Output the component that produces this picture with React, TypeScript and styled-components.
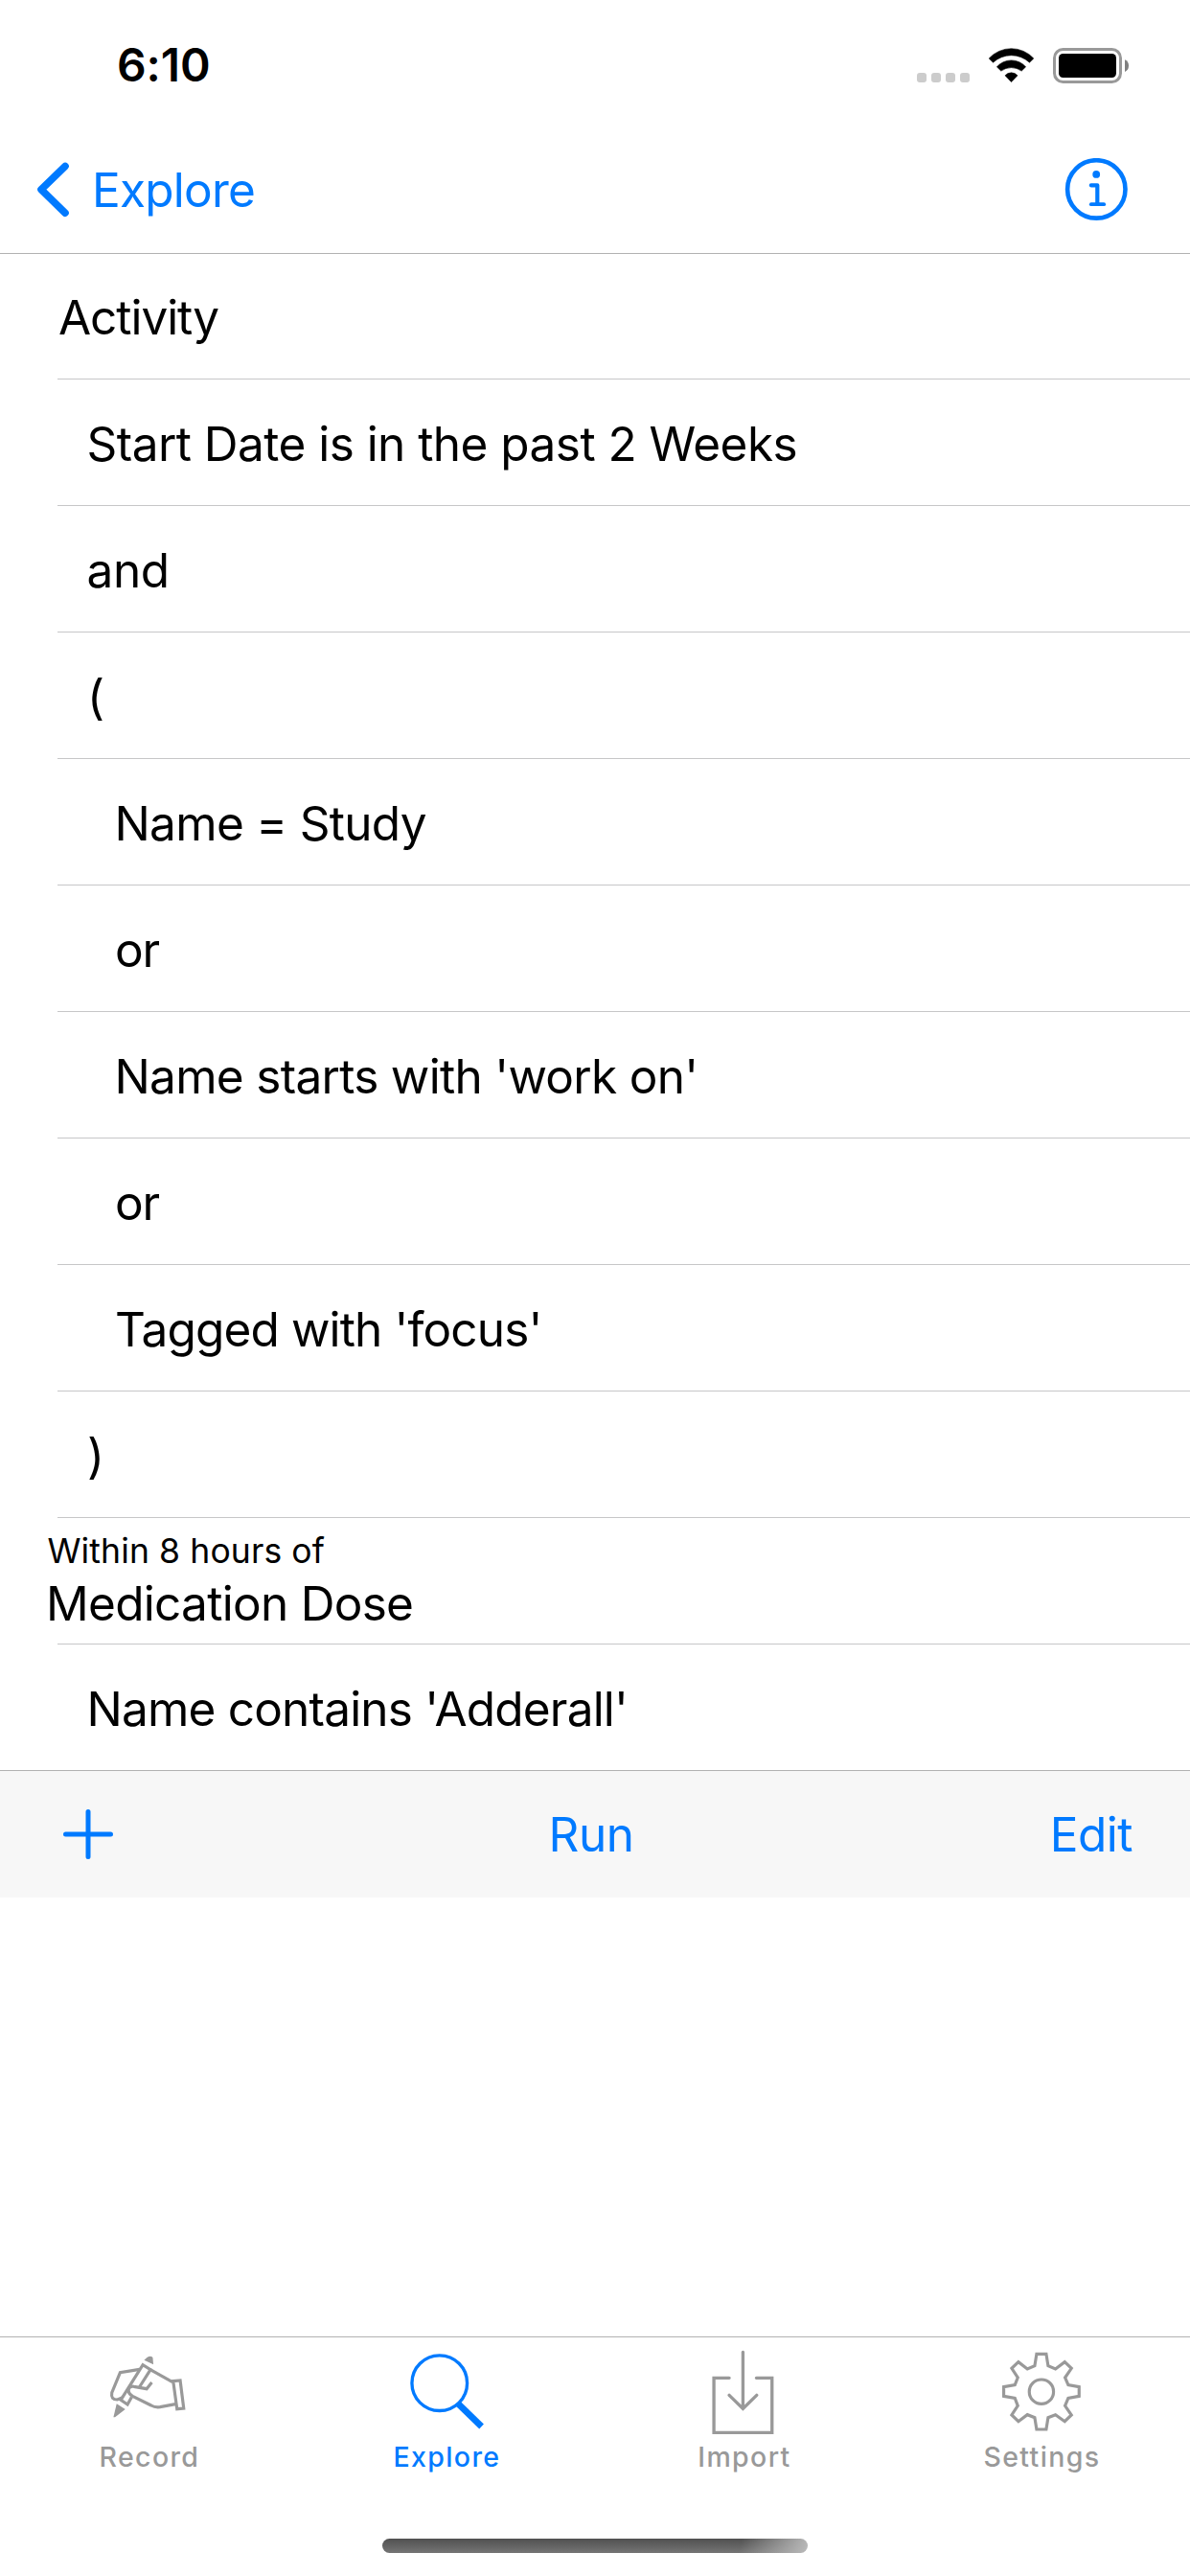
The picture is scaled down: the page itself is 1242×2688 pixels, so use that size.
import React from "react";
import styled, { createGlobalStyle } from "styled-components";

const BLUE = "#007aff";
const GRAY = "#999999";
const HAIRLINE = "#b2b2b2";
const SEPARATOR = "#c7c7c8";

const GlobalStyle = createGlobalStyle`
  body {
    margin: 0;
    background: #fff;
  }
  * {
    box-sizing: border-box;
  }
  svg {
    display: block;
    flex: none;
  }
`;

const Screen = styled.div`
  display: flex;
  flex-direction: column;
  width: 1242px;
  height: 2688px;
  overflow: hidden;
  background: #fff;
  color: #000;
  font-family: Inter, "Liberation Sans", sans-serif;
  font-size: 49.5px;
  line-height: 60px;
  white-space: pre;
`;

const StatusBar = styled.header`
  display: flex;
  align-items: center;
  justify-content: space-between;
  height: 132px;
  padding: 3px 62px 0 122px;
`;

const Clock = styled.time`
  font-size: 48px;
  font-weight: 600;
  letter-spacing: -0.1px;
`;

const NavBar = styled.nav`
  display: flex;
  align-items: center;
  justify-content: space-between;
  height: 133px;
  padding: 0 64px 0 38px;
  border-bottom: 1px solid ${HAIRLINE};
`;

const BackButton = styled.a`
  display: flex;
  align-items: center;
  gap: 22px;
  color: ${BLUE};
  letter-spacing: -0.76px;
`;

const List = styled.ul`
  margin: -1px 0 0;
  padding: 0;
  list-style: none;
`;

const Row = styled.li`
  display: flex;
  height: 132px;
  padding-left: 60px;

  &:last-child {
    padding-left: 0;
    border-bottom: 1px solid ${HAIRLINE};
  }
`;

const RowBody = styled.div<{ $inset: number; $tracking: number }>`
  display: flex;
  flex: 1;
  align-items: center;
  padding: 3px 0 0 ${(p) => p.$inset}px;
  border-bottom: 1px solid ${SEPARATOR};
  letter-spacing: ${(p) => p.$tracking}px;

  ${Row}:last-child & {
    padding-left: ${(p) => p.$inset + 60}px;
    padding-top: 2px;
    border-bottom: 0;
  }
`;

const StackedBody = styled.div`
  display: flex;
  flex: 1;
  flex-direction: column;
  padding-top: 13px;
  border-bottom: 1px solid ${SEPARATOR};
`;

const Caption = styled.span`
  margin-left: -10.5px;
  font-size: 35.5px;
  line-height: 44px;
  letter-spacing: 0.12px;
`;

const StackedTitle = styled.span`
  margin: 2px 0 0 -12px;
  letter-spacing: -0.71px;
`;

const Toolbar = styled.div`
  display: grid;
  grid-template-columns: 1fr auto 1fr;
  align-items: center;
  height: 132px;
  padding: 0 60px 0 52px;
  background: #f7f7f7;
`;

const ToolButton = styled.button<{ $align: "start" | "center" | "end" }>`
  display: block;
  justify-self: ${(p) => p.$align};
  margin: 0;
  padding: 0;
  border: 0;
  background: none;
  color: ${BLUE};
  font: inherit;
  letter-spacing: -0.5px;
`;

const PlusIcon = styled.svg`
  margin-left: 14px;
`;

const EmptyArea = styled.div`
  flex: 1;
`;

const TabBar = styled.nav`
  display: grid;
  grid-template-columns: repeat(4, 1fr);
  height: 201px;
  padding-top: 1px;
  border-top: 1px solid ${HAIRLINE};
`;

const Tab = styled.a<{ $active?: boolean }>`
  display: flex;
  flex-direction: column;
  align-items: center;
  gap: 6px;
  color: ${(p) => (p.$active ? BLUE : GRAY)};
`;

const TabLabel = styled.span`
  padding-left: 1.4px;
  font-size: 28.5px;
  font-weight: 500;
  line-height: 36px;
  letter-spacing: 1.37px;
`;

const HomeArea = styled.footer`
  display: flex;
  justify-content: center;
  height: 49px;
  padding-top: 10px;
`;

const HomeIndicator = styled.div`
  width: 444px;
  height: 15px;
  border-radius: 8px;
  background:
    linear-gradient(100deg, rgba(190, 190, 190, 0) 84%, rgba(190, 190, 190, 0.95) 100%),
    linear-gradient(#505050, #757575);
`;

const StatusIcons = () => (
  <svg width="224" height="40" viewBox="956 47 224 40">
    {[957, 972, 987, 1002].map((x) => (
      <rect key={x} x={x} y="75" width="10" height="10" rx="3" fill="#cccccc" />
    ))}
    <g stroke="#000" strokeWidth="0.6" strokeLinejoin="round">
      <path d="M1032.2 60A31.5 31.5 0 0 1 1078.8 60L1074.5 64.2A28 28 0 0 0 1036.5 64.2Z" />
      <path d="M1040.4 68.8A20 20 0 0 1 1070.6 68.8L1066.2 73.1A18 18 0 0 0 1044.8 73.1Z" />
      <path d="M1049 77.8A8.6 8.6 0 0 1 1062 77.8L1055.5 84.6Z" />
    </g>
    <rect x="1100.5" y="50.5" width="69" height="34" rx="9" fill="none" stroke="#999" strokeWidth="3" />
    <rect x="1105" y="55" width="60" height="25" rx="4.5" />
    <path d="M1174 61.2Q1178 63 1178 67.6T1174 74Z" fill="#808080" />
  </svg>
);

const ChevronIcon = () => (
  <svg width="36" height="64" viewBox="38 166 36 64" fill="none" stroke={BLUE} strokeWidth="7.6" strokeLinecap="round" strokeLinejoin="round">
    <path d="M68 173.5L43 197.8L68 222.2" />
  </svg>
);

const InfoIcon = () => (
  <svg width="68" height="66" viewBox="1110 165 68 66" fill="none" stroke={BLUE} strokeLinecap="round">
    <circle cx="1144.3" cy="197.4" r="30.2" strokeWidth="4.6" />
    <circle cx="1144.2" cy="181.9" r="3.9" fill={BLUE} stroke="none" />
    <path d="M1138.8 193.3H1145.3V213" strokeWidth="4.2" strokeLinejoin="round" />
    <path d="M1138.8 213.2H1152.2" strokeWidth="3.8" />
  </svg>
);

const RecordIcon = () => (
  <svg width="90" height="100" viewBox="90.75 30 270 300" fill="none" stroke="currentColor" strokeWidth="9.5">
    <path d="M212 98L221 90Q232 83 239 90L241 112Z" fill="currentColor" stroke="none" />
    <path d="M126 235L153 252L121 277H116Z" fill="currentColor" stroke="none" />
    <path d="M173 214L160 237L139 223L208 113L232 128L197 183" />
    <path d="M198 127L137 137L111 200Q107 222 128 222L143 216" />
    <path d="M230 127L301 167" />
    <path d="M303 164L325 162L336 249L315 251Z" />
    <path d="M310 236L262 245Q246 247 234 240L176 211Q160 202 164 188Q168 178 180 181L220 188L236 168" />
  </svg>
);

const ExploreIcon = () => (
  <svg width="90" height="100" viewBox="92.25 30 270 300" fill="none" stroke="currentColor">
    <circle cx="205.5" cy="170" r="86.5" strokeWidth="10" />
    <path d="M263 234L337 306" strokeWidth="20" />
  </svg>
);

const ImportIcon = () => (
  <svg width="90" height="100" viewBox="93.75 30 270 300" fill="none" stroke="currentColor" strokeWidth="10" strokeLinecap="round">
    <path d="M184 154H136V325H318V154H269" />
    <path d="M227 73V248M184 208L227 250L270 208" />
  </svg>
);

const SettingsIcon = () => (
  <svg width="90" height="100" viewBox="125.25 30 270 300" fill="none" stroke="currentColor" strokeWidth="9.5">
    <path d="M245 79H275L281 116L304 126L333 104L354 124L334 153L344 176L378 182V211L344 217L334 241L354 270L333 290L304 269L281 278L275 315H245L239 278L216 269L188 290L167 270L186 241L177 217L142 211V182L177 176L186 153L167 124L188 104L216 126L239 116Z" />
    <circle cx="260" cy="197" r="38" />
  </svg>
);

type Condition = { text: string; inset: number; tracking: number };

const conditions: Condition[] = [
  { text: "Activity", inset: 1, tracking: -1.05 },
  { text: "Start Date is in the past 2 Weeks", inset: 30.5, tracking: -0.53 },
  { text: "and", inset: 30.5, tracking: -0.4 },
  { text: "(", inset: 31, tracking: 0 },
  { text: "Name = Study", inset: 59.5, tracking: -0.68 },
  { text: "or", inset: 60, tracking: -1.2 },
  { text: "Name starts with 'work on'", inset: 59.5, tracking: -0.7 },
  { text: "or", inset: 60, tracking: -1.2 },
  { text: "Tagged with 'focus'", inset: 60, tracking: -0.86 },
  { text: ")", inset: 31, tracking: 0 },
];

const tabs = [
  { label: "Record", Icon: RecordIcon },
  { label: "Explore", Icon: ExploreIcon, active: true },
  { label: "Import", Icon: ImportIcon },
  { label: "Settings", Icon: SettingsIcon },
];

export default function App() {
  return (
    <>
      <GlobalStyle />
      <Screen>
        <StatusBar>
          <Clock>6:10</Clock>
          <StatusIcons />
        </StatusBar>
        <NavBar>
          <BackButton>
            <ChevronIcon />
            Explore
          </BackButton>
          <InfoIcon />
        </NavBar>
        <List>
          {conditions.map((c, i) => (
            <Row key={i}>
              <RowBody $inset={c.inset} $tracking={c.tracking}>
                {c.text}
              </RowBody>
            </Row>
          ))}
          <Row>
            <StackedBody>
              <Caption>Within 8 hours of</Caption>
              <StackedTitle>Medication Dose</StackedTitle>
            </StackedBody>
          </Row>
          <Row>
            <RowBody $inset={30.5} $tracking={-0.8}>
              Name contains 'Adderall'
            </RowBody>
          </Row>
        </List>
        <Toolbar>
          <ToolButton $align="start" aria-label="Add">
            <PlusIcon width="52" height="52" viewBox="0 0 52 52" stroke={BLUE} strokeWidth="5" strokeLinecap="round">
              <path d="M26 2.5V49.5M2.5 26H49.5" />
            </PlusIcon>
          </ToolButton>
          <ToolButton $align="center">Run</ToolButton>
          <ToolButton $align="end">Edit</ToolButton>
        </Toolbar>
        <EmptyArea />
        <TabBar>
          {tabs.map(({ label, Icon, active }) => (
            <Tab key={label} $active={active}>
              <Icon />
              <TabLabel>{label}</TabLabel>
            </Tab>
          ))}
        </TabBar>
        <HomeArea>
          <HomeIndicator />
        </HomeArea>
      </Screen>
    </>
  );
}
